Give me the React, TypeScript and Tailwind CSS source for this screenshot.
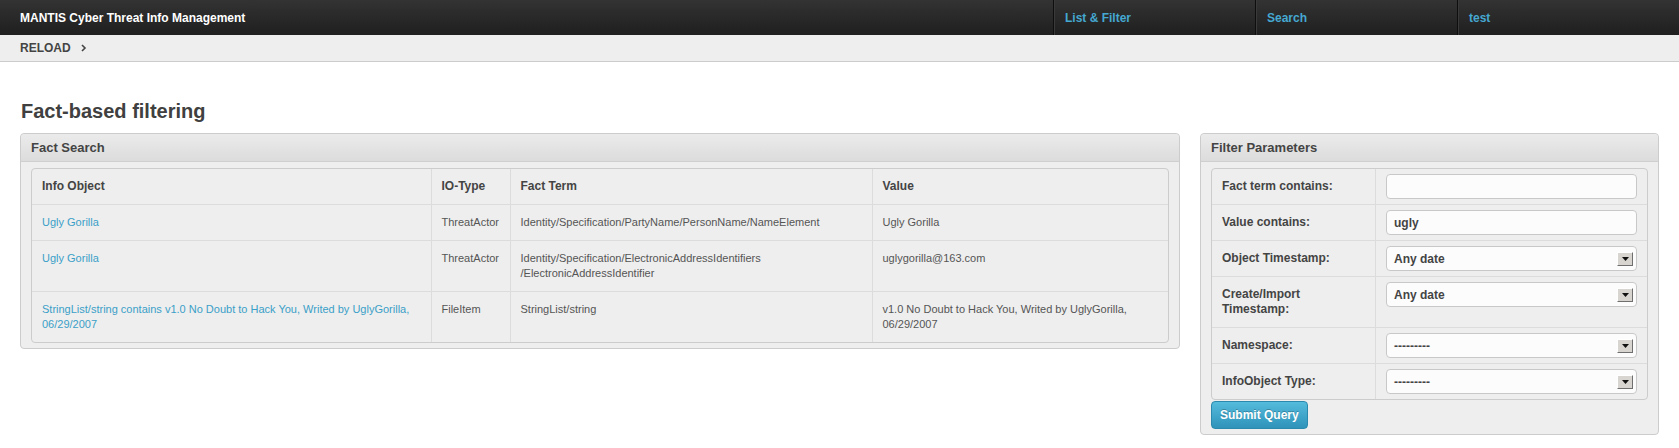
const font = { fontFamily: '"Liberation Sans", Arial, sans-serif' };

const facts = [
  {
    obj: "Ugly Gorilla",
    type: "ThreatActor",
    term: ["Identity/Specification/PartyName/PersonName/NameElement"],
    value: "Ugly Gorilla",
  },
  {
    obj: "Ugly Gorilla",
    type: "ThreatActor",
    term: ["Identity/Specification/ElectronicAddressIdentifiers", "/ElectronicAddressIdentifier"],
    value: "uglygorilla@163.com",
  },
  {
    obj: "StringList/string contains v1.0 No Doubt to Hack You, Writed by UglyGorilla, 06/29/2007",
    type: "FileItem",
    term: ["StringList/string"],
    value: "v1.0 No Doubt to Hack You, Writed by UglyGorilla, 06/29/2007",
  },
];

function SelectBox({ value }: { value: string }) {
  return (
    <div className="h-[25px] w-[251px] flex items-center justify-between bg-[#fcfcfc] border border-[#c8c8c8] rounded-[4px] pl-[7px] pr-[3px]">
      <span className="text-[12px] font-bold text-[#444]">{value}</span>
      <span className="w-[16px] h-[14px] flex items-center justify-center bg-[#d8d5d0] border-t border-l border-t-white border-l-white border-r border-b border-r-[#6f6f6f] border-b-[#6f6f6f]">
        <svg width="7" height="4" viewBox="0 0 7 4">
          <path d="M0 0h7L3.5 4z" fill="#111" />
        </svg>
      </span>
    </div>
  );
}

function TextBox({ value }: { value: string }) {
  return (
    <div className="h-[25px] w-[251px] flex items-center bg-[#fcfcfc] border border-[#c8c8c8] rounded-[4px] px-[7px] text-[12px] font-bold text-[#444]">
      {value}
    </div>
  );
}

const params: { label: React.ReactNode; field: React.ReactNode }[] = [
  { label: "Fact term contains:", field: <TextBox value="" /> },
  { label: "Value contains:", field: <TextBox value="ugly" /> },
  { label: "Object Timestamp:", field: <SelectBox value="Any date" /> },
  { label: <>Create/Import<br />Timestamp:</>, field: <SelectBox value="Any date" /> },
  { label: "Namespace:", field: <SelectBox value="---------" /> },
  { label: "InfoObject Type:", field: <SelectBox value="---------" /> },
];

function PanelHeader({ title }: { title: string }) {
  return (
    <div className="h-[28px] flex items-center px-[10px] bg-gradient-to-b from-[#ebebeb] to-[#dcdcdc] border-b border-[#cfcfcf] rounded-t-[4px] text-[13px] font-bold text-[#444]">
      {title}
    </div>
  );
}

export default function App() {
  return (
    <div className="min-h-[448px] bg-white text-[#555]" style={font}>
      <header className="h-[35px] bg-gradient-to-b from-[#333333] to-[#1f1f1f]">
        <div className="mx-[20px] h-full flex items-stretch">
          <div className="flex-1 flex items-center text-[12px] font-bold text-white">
            MANTIS Cyber Threat Info Management
          </div>
          {["List & Filter", "Search", "test"].map((item) => (
            <a
              key={item}
              className="w-[202px] flex items-center pl-[11px] border-l border-[#0e0e0e] shadow-[inset_1px_0_0_#3a3a3a] text-[12px] font-bold text-[#45a8d1]"
            >
              {item}
            </a>
          ))}
        </div>
      </header>

      <div className="h-[27px] bg-[#eeeeee] border-b border-[#cccccc]">
        <div className="mx-[20px] h-full flex items-center gap-[10px] text-[12px] font-bold text-[#444]">
          RELOAD
          <svg width="6" height="8" viewBox="0 0 6 8">
            <path d="M1 1l3 3-3 3" fill="none" stroke="#444" strokeWidth="1.6" />
          </svg>
        </div>
      </div>

      <main className="mx-[20px] pt-[37px] pb-[15px]">
        <h2 className="pl-px text-[20px] leading-[24px] font-bold text-[#404040] mb-[10px]">Fact-based filtering</h2>

        <div className="flex items-start gap-[20px]">
          <section className="w-[1160px] bg-[#eeeeee] border border-[#cccccc] rounded-[4px]">
            <PanelHeader title="Fact Search" />
            <div className="pt-[6px] px-[10px] pb-[5px]">
              <div className="border border-[#cccccc] rounded-[4px] overflow-hidden">
                <table className="w-full border-collapse table-fixed text-left">
                  <colgroup>
                    <col className="w-[399px]" />
                    <col className="w-[79px]" />
                    <col className="w-[362px]" />
                    <col />
                  </colgroup>
                  <thead>
                    <tr className="text-[12px] font-bold text-[#444]">
                      {["Info Object", "IO-Type", "Fact Term", "Value"].map((h, i) => (
                        <th
                          key={h}
                          className={`px-[10px] py-[10px] leading-[15px] align-top font-bold ${i > 0 ? "border-l border-[#dcdcdc]" : ""}`}
                        >
                          {h}
                        </th>
                      ))}
                    </tr>
                  </thead>
                  <tbody className="text-[11px] text-[#555]">
                    {facts.map((f, r) => (
                      <tr key={r} className="border-t border-[#dcdcdc]">
                        <td className="px-[10px] py-[10px] leading-[15px] align-top">
                          <a className="text-[#3a9fc8]">{f.obj}</a>
                        </td>
                        <td className="px-[10px] py-[10px] leading-[15px] align-top border-l border-[#dcdcdc]">{f.type}</td>
                        <td className="px-[10px] py-[10px] leading-[15px] align-top border-l border-[#dcdcdc]">
                          {f.term.map((t, i) => (
                            <div key={i}>{t}</div>
                          ))}
                        </td>
                        <td className="px-[10px] py-[10px] leading-[15px] align-top border-l border-[#dcdcdc]">{f.value}</td>
                      </tr>
                    ))}
                  </tbody>
                </table>
              </div>
            </div>
          </section>

          <section className="w-[459px] bg-[#eeeeee] border border-[#cccccc] rounded-[4px]">
            <PanelHeader title="Filter Parameters" />
            <div className="pt-[6px] px-[10px] pb-[5px]">
              <div className="border border-[#cccccc] rounded-[4px] overflow-hidden">
                {params.map((p, i) => (
                  <div key={i} className={`flex ${i > 0 ? "border-t border-[#dcdcdc]" : ""}`}>
                    <div className="w-[163px] px-[10px] py-[10px] leading-[15px] text-[12px] font-bold text-[#444]">
                      {p.label}
                    </div>
                    <div className="flex-1 border-l border-[#dcdcdc] px-[10px] py-[5px]">{p.field}</div>
                  </div>
                ))}
              </div>
              <button
                className="mt-px h-[28px] px-[8px] rounded-[4px] border border-[#2a89ad] bg-gradient-to-b from-[#54bbdc] to-[#2f93ba] text-[12px] font-bold text-white [text-shadow:0_-1px_0_rgba(0,0,0,0.25)]"
                style={font}
              >
                Submit Query
              </button>
            </div>
          </section>
        </div>
      </main>
    </div>
  );
}
